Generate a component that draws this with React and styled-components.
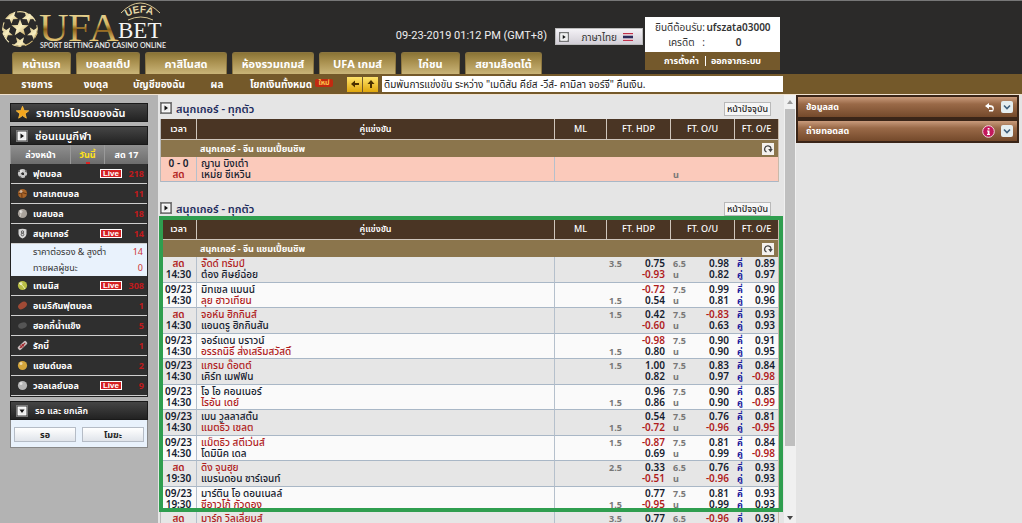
import React from "react";
import styled, { createGlobalStyle, css } from "styled-components";

const GlobalStyle = createGlobalStyle`
  *, *::before, *::after { box-sizing: border-box; }
  body { margin: 0; background: #e4e4e4; }
  body, button { font-family: "Noto Sans", "Noto Sans Thai", "Liberation Sans", sans-serif; }
  button { margin: 0; padding: 0; border: 0; background: none; cursor: pointer; }
  a { color: inherit; text-decoration: none; }
  ul { list-style: none; margin: 0; padding: 0; }
  h2 { margin: 0; }
`;

const Page = styled.div`
  display: flex;
  flex-direction: column;
  height: 100vh;
  overflow: hidden;
  font-size: 10px;
`;

/* ---------- header ---------- */
const Header = styled.header`
  display: flex;
  flex: none;
  background: #2b2a29;
  border-top: 1px solid #777;
`;
const HeaderMain = styled.div`
  width: 645px;
`;
const Brand = styled.div`
  display: flex;
  align-items: flex-start;
  height: 51px;
`;
const Clock = styled.time`
  margin: 27px 8px 0 auto;
  color: #eee;
  font: 11px/16px Roboto, "Liberation Sans", sans-serif;
  white-space: nowrap;
`;
const Language = styled.button`
  display: flex;
  align-items: center;
  gap: 6px;
  width: 88px;
  height: 17px;
  margin: 27px 2px 0 0;
  padding: 0 9px 0 3px;
  background: linear-gradient(#f4f2f6, #d2ced6);
  border: 1px solid #bbb;
  color: #333;
  font-size: 10px;
  line-height: 14px;
  white-space: nowrap;
  span { flex: 1; text-align: right; }
`;
const Tabs = styled.nav`
  display: flex;
  gap: 5px;
  padding-left: 12px;
  height: 22px;
`;
const Tab = styled.a`
  width: ${(p) => p.$w}px;
  background: linear-gradient(#8a7436, #a88f4e 40%, #c9b478);
  border: 1px solid #8c7640;
  border-bottom: 0;
  border-radius: 3px 3px 0 0;
  color: #fff;
  font-size: 11px;
  font-weight: 700;
  line-height: 22px;
  text-align: center;
  white-space: nowrap;
  overflow: hidden;
`;
const Account = styled.section`
  width: 135px;
  margin-top: 16px;
  height: 53px;
`;
const AccountInfo = styled.dl`
  display: grid;
  grid-template-columns: 52px 1fr;
  margin: 0;
  padding: 3px 8px 2px;
  height: 35px;
  background: #fff;
  color: #333;
  font-size: 10px;
  line-height: 14px;
  white-space: nowrap;
  dt { text-align: right; }
  dd { margin: 0; text-align: center; font-weight: 600; }
`;
const AccountLinks = styled.div`
  display: flex;
  justify-content: center;
  gap: 6px;
  height: 18px;
  background: #74592c;
  color: #fff;
  font-size: 9px;
  font-weight: 700;
  line-height: 18px;
  white-space: nowrap;
  a + a { padding-left: 6px; background: linear-gradient(#fff, #fff) left center / 1px 10px no-repeat; }
`;
const SubBar = styled.div`
  display: flex;
  align-items: center;
  flex: none;
  height: 21px;
  padding-left: 13px;
  background: #74592a;
  border-bottom: 1px solid #f1e2cf;
`;
const SubNav = styled.nav`
  display: flex;
  width: 334px;
`;
const SubLink = styled.a`
  width: ${(p) => p.$w}px;
  color: #fff;
  font-size: 10px;
  font-weight: 700;
  line-height: 20px;
  text-align: center;
  white-space: nowrap;
`;
const NewBadge = styled.span`
  align-self: flex-start;
  margin-top: 5px;
  width: 18px;
  height: 8px;
  border-radius: 2px;
  background: #c22a10;
  color: #ffc04a;
  font-size: 7px;
  font-weight: 700;
  line-height: 8px;
  text-align: center;
`;
const ArrowButton = styled.button`
  display: grid;
  place-items: center;
  width: 15px;
  height: 15px;
  margin-right: 1px;
  background: linear-gradient(#ffe36a, #e0a70c);
`;
const Marquee = styled.p`
  width: 401px;
  height: 16px;
  margin: 0 0 0 3px;
  padding-left: 2px;
  background: #fff;
  color: #222;
  font-size: 10px;
  line-height: 16px;
  white-space: nowrap;
  overflow: hidden;
`;

/* ---------- layout ---------- */
const Body = styled.div`
  display: flex;
  flex: 1;
  min-height: 0;
`;
const Sidebar = styled.aside`
  flex: none;
  width: 158px;
  padding: 8px 10px 0;
  background: #b3b3b3;
`;
const Main = styled.main`
  flex: 1;
  min-width: 0;
  padding: 6px 5px 0 2px;
  overflow: hidden;
  background: #e5e5e5;
`;
const ScrollTrack = styled.div`
  display: flex;
  flex-direction: column;
  align-items: center;
  flex: none;
  width: 12px;
  padding: 5px 0 3px;
  background: #f0f0f0;
`;
const ScrollThumb = styled.div`
  width: 10px;
  height: 337px;
  margin: 5px 0 auto;
  background: #bfbfbf;
`;
const RightPanel = styled.aside`
  flex: none;
  width: 226px;
  padding-right: 3px;
  background: #e4e4e4;
`;

/* ---------- sidebar ---------- */
const Bar = styled.h2`
  display: flex;
  align-items: center;
  gap: 7px;
  height: 19px;
  padding-left: 5px;
  background: linear-gradient(#454545, #222);
  border: 1px solid #1a1a1a;
  color: #fff;
  font-size: ${(p) => (p.$small ? 9 : 11)}px;
  font-weight: 600;
  line-height: 17px;
  white-space: nowrap;
`;
const Box = styled.div`
  margin-top: 4px;
  width: 138px;
`;
const DayTabs = styled.div`
  display: grid;
  grid-template-columns: 60px 34px 1fr;
  height: 19px;
  background: linear-gradient(#8f8f8f, #6d6d6d);
`;
const DayTab = styled.button`
  border-left: 1px solid #999;
  color: ${(p) => (p.$on ? "#ffe11a" : "#fff")};
  font-size: 9px;
  font-weight: 700;
  line-height: 18px;
  background: ${(p) => (p.$on ? "linear-gradient(#d22,#d22) center bottom / 4px 2px no-repeat" : "none")};
`;
const Sports = styled.ul`
  border: 1px solid #222;
  border-top: 0;
`;
const Sport = styled.li`
  a {
    display: grid;
    grid-template-columns: 22px 1fr 26px 18px;
    align-items: center;
    height: 20px;
    padding-right: 3px;
    background: #2f2f2f;
    border-bottom: 1px solid #cfcfcf;
    color: #fff;
    font-size: 9px;
    font-weight: 700;
    line-height: 18px;
    white-space: nowrap;
  }
  svg { justify-self: center; }
`;
const Live = styled.span`
  grid-column: 3;
  width: 22px;
  height: 9px;
  border: 1px solid #fff;
  background: #d31f22;
  color: #fff;
  font: 700 8px/7px "Liberation Sans", sans-serif;
  text-align: center;
`;
const Count = styled.span`
  grid-column: 4;
  color: #c01a1c;
  text-align: right;
`;
const Markets = styled.ul`
  background: #e9f2fc;
  li a {
    display: flex;
    justify-content: space-between;
    height: 16px;
    padding: 0 4px 0 22px;
    background: none;
    border: 0;
    color: #333;
    font-weight: 400;
    line-height: 16px;
  }
  li b { color: #c33; font-weight: 400; }
`;
const BetActions = styled.div`
  display: grid;
  grid-template-columns: 1fr 1fr;
  gap: 6px;
  height: 28px;
  padding: 7px 3px 5px;
  background: #e9f2fc;
  border: 1px solid #888;
  border-top: 0;
  button {
    background: linear-gradient(#fff, #e0e4ea);
    border: 1px solid #b5bcc6;
    color: #222;
    font-size: 9px;
    font-weight: 700;
    line-height: 12px;
  }
`;

/* ---------- odds tables ---------- */
const Market = styled.section`
  position: relative;
  margin-bottom: 19px;
`;
const MarketHead = styled.div`
  display: flex;
  align-items: flex-start;
  gap: 4px;
  height: 18px;
  padding-top: 1px;
  h2 {
    flex: 1;
    color: #1c2a5c;
    font-size: 11px;
    font-weight: 600;
    line-height: 14px;
  }
`;
const PageButton = styled.button`
  width: 47px;
  height: 14px;
  margin-right: 8px;
  background: #f6f6f6;
  border: 1px solid #b9b9b9;
  color: #222;
  font-size: 9px;
  font-weight: 500;
  line-height: 12px;
  white-space: nowrap;
`;
const Table = styled.table`
  width: 100%;
  table-layout: fixed;
  border-collapse: separate;
  border-spacing: 0;
  border-left: 1px solid #b9b9b9;
  border-right: 1px solid #c9b9a9;
`;
const Th = styled.th`
  height: 21px;
  padding: 0;
  background: #4a3524;
  border-right: 1px solid #cfc6bc;
  border-bottom: 1px solid #cfc6bc;
  color: #fff;
  font-size: 9px;
  font-weight: ${(p) => (p.$plain ? 500 : 600)};
  line-height: 18px;
  &:last-child { border-right: 0; }
`;
const League = styled.td`
  height: 17px;
  padding: 0 4px 0 39px;
  background: #8b754c;
  color: #fff;
  font-size: 9px;
  font-weight: 700;
  line-height: 17px;
  div { display: flex; align-items: center; justify-content: space-between; }
`;
const Refresh = styled.button`
  display: grid;
  place-items: center;
  width: 12px;
  height: 12px;
  background: #f3f1ee;
`;
const tones = { live: "#fbcabb", even: "#e6e6e6", odd: "#fafafa" };
const Row = styled.tr`
  height: ${(p) => (p.$tone === "even" ? 26 : 25)}px;
  background: ${(p) => tones[p.$tone]};
`;
const Cell = styled.td`
  padding: 1px 0 0;
  border-bottom: 1px solid #a9b7c6;
  color: #15202e;
  font-size: 10px;
  line-height: 11px;
  vertical-align: top;
  white-space: nowrap;
  ${(p) => p.$rule && css`border-right: 1px solid #b5c0cc;`}
`;
const Lines = styled.div`
  display: grid;
  grid-auto-rows: 11px;
  justify-items: ${(p) => p.$align || "end"};
  padding: 0 ${(p) => p.$right || 0}px 0 ${(p) => p.$left || 0}px;
  font-weight: ${(p) => p.$weight || 700};
  font-size: ${(p) => (p.$small ? 9 : 10)}px;
`;
const Text = styled.span`
  color: ${(p) => p.$color || "inherit"};
`;
const Split = styled.div`
  display: flex;
  justify-content: space-between;
`;
const Highlight = styled.div`
  position: absolute;
  inset: 15px -4px auto -1px;
  height: 296px;
  border: 4px solid #2f9e4f;
  pointer-events: none;
`;

/* ---------- right panel ---------- */
const PanelBar = styled.div`
  display: flex;
  align-items: center;
  gap: 6px;
  height: 24px;
  padding: 0 4px 0 8px;
  background: linear-gradient(#c99b7c, #9a6a48 35%, #74492b);
  border: 2px solid #3a2518;
  color: #fff;
  font-size: 9px;
  font-weight: 700;
  span { flex: 1; }
`;
const PanelToggle = styled.button`
  display: grid;
  place-items: center;
  width: 12px;
  height: 12px;
  border-radius: 2px;
  background: #e5edf0;
`;

const SquareIcon = ({ down, size = 12 }) => (
  <svg width={size} height={size} viewBox="0 0 12 12">
    <rect x=".5" y=".5" width="11" height="11" fill="#333" stroke="#777" />
    <rect x="2" y="2" width="8" height="8" fill="#eee" stroke="#fff" />
    <path d={down ? "M3.500 4.500h5L6 8z" : "M4.500 3.500v5L8 6z"} fill="#111" />
  </svg>
);

const Ball = ({ kind }) => {
  const fill = {
    foot: "#c9c9c9", basket: "#a8652a", base: "#a9a39c", snooker: "#d7d7d7", tennis: "#b8bd45",
    american: "#a04a35", hockey: "#555", rugby: "#b88", hand: "#d3a53c", volley: "#b5b5b5",
  }[kind];
  return (
    <svg width="11" height="11" viewBox="0 0 11 11">
      {kind === "american" && <ellipse cx="5.500" cy="5.500" rx="4.800" ry="3.200" transform="rotate(-35 5.500 5.500)" fill={fill} />}
      {kind === "hockey" && <ellipse cx="5.500" cy="5.500" rx="4.500" ry="3" transform="rotate(-20 5.500 5.500)" fill={fill} />}
      {kind === "rugby" && (
        <g transform="rotate(-42 5.500 5.500)">
          <rect x="0" y="3.500" width="11" height="4" rx="1.500" fill="#c9bcbc" />
          <path d="M2 5.500h7M4 4v3M6 4v3" stroke="#a3282d" strokeWidth="1.200" />
        </g>
      )}
      {kind === "snooker" && <path d="M1.500 1.500Q5.500 0 9.500 1.500V6Q9 9 5.500 10.500Q2 9 1.500 6z" fill={fill} />}
      {!["american", "hockey", "rugby", "snooker"].includes(kind) && <circle cx="5.500" cy="5.500" r="4.600" fill={fill} />}
      {kind === "foot" && <path d="M5 4l2 1 0 2-2 0-1-1.500zM1 4l2-2 0 2zM8 1.500l2 3-1.500-.5zM3 8l2 2-3-1zM8 8l2-1-2 3z" fill="#333" />}
      {kind === "basket" && <path d="M2 2q4 3 3 8M1 6q4-3 9 0" stroke="#5a2d0d" fill="none" strokeWidth=".8" />}
      {kind === "base" && <path d="M3 2q2 3 0 7" stroke="#d6d2cc" fill="none" strokeWidth=".8" />}
      {kind === "snooker" && <><circle cx="5.500" cy="4" r="1.200" fill="none" stroke="#444" strokeWidth=".8" /><circle cx="5.500" cy="6.500" r="1.300" fill="none" stroke="#444" strokeWidth=".8" /></>}
      {kind === "tennis" && <path d="M2 3q4 2 6 6" stroke="#eef0b0" fill="none" />}
      {["foot", "hand", "volley", "tennis", "basket", "base"].includes(kind) && <circle cx="4" cy="3.500" r="1.500" fill="#fff" opacity=".55" />}
    </svg>
  );
};

const starPath = (cx, cy, r, rot = 0) =>
  Array.from({ length: 10 }, (_, i) => {
    const a = ((-90 + rot + i * 36) * Math.PI) / 180;
    const q = i % 2 ? r * 0.42 : r;
    return `${i ? "L" : "M"}${(cx + q * Math.cos(a)).toFixed(2)} ${(cy + q * Math.sin(a)).toFixed(2)}`;
  }).join("") + "z";

const Logo = () => (
  <svg width="170" height="50" viewBox="0 0 170 50" role="img" aria-label="UFABET">
    <defs>
      <linearGradient id="gold" x1="0" y1="0" x2="0" y2="1">
        <stop offset="0" stopColor="#f6ecc0" />
        <stop offset=".45" stopColor="#d3b560" />
        <stop offset=".55" stopColor="#8d6117" />
        <stop offset=".8" stopColor="#e6c878" />
        <stop offset="1" stopColor="#e6c878" />
      </linearGradient>
      <linearGradient id="ballGold" x1="0" y1="0" x2="1" y2="1">
        <stop offset="0" stopColor="#cdb679" />
        <stop offset=".5" stopColor="#f8efc2" />
        <stop offset="1" stopColor="#b8964a" />
      </linearGradient>
      <clipPath id="ballClip"><circle cx="20" cy="28" r="18" /></clipPath>
      <path id="arc" d="M125 17Q140 7 156 16" />
    </defs>
    <g clipPath="url(#ballClip)" fill="url(#ballGold)">
      <path d={starPath(20, 27, 9)} />
      {[0, 1, 2, 3, 4].map((i) => {
        const a = ((-90 + i * 72 + 36) * Math.PI) / 180;
        return <path key={i} d={starPath(20 + 14.5 * Math.cos(a), 27.5 + 14.5 * Math.sin(a), 7, i * 72 + 36)} />;
      })}
      <circle cx="20" cy="28" r="17.300" fill="none" stroke="url(#ballGold)" strokeWidth="1.200" strokeDasharray="9 4" />
    </g>
    <g fontFamily="Liberation Serif, serif">
      <text x="39" y="40" fontSize="41" fill="url(#gold)">U</text>
      <text x="68" y="40" fontSize="41" fill="url(#gold)">F</text>
      <text x="89" y="40" fontSize="41" fill="url(#gold)">A</text>
      <text x="118" y="37" fontSize="23" fill="#f4f4f4">BET</text>
    </g>
    <path d="M121 12Q140-8 160 12" fill="none" stroke="#d9c691" />
    <path d="M128 19Q141 13 153 19" fill="none" stroke="#d9c691" />
    <text fontFamily="Liberation Sans, sans-serif" fontSize="10" fontWeight="700" fill="#e6d9a8">
      <textPath href="#arc" startOffset="2">UEFA</textPath>
    </text>
    <text x="40" y="47" fontFamily="Lato, sans-serif" fontSize="7" fontWeight="600" fill="#eee">SPORT BETTING AND CASINO ONLINE</text>
  </svg>
);

const Flag = () => (
  <svg width="10" height="8" viewBox="0 0 10 8">
    <path fill="#c0304a" d="M0 0h10v8H0z" />
    <path fill="#fff" d="M0 1.300h10v5.400H0z" />
    <path fill="#2d2a5a" d="M0 2.600h10v2.800H0z" />
  </svg>
);

const ReloadIcon = () => (
  <svg width="10" height="10" viewBox="0 0 10 10">
    <path d="M3.500 8A3.200 3.200 0 1 1 8 5" fill="none" stroke="#444" strokeWidth="1.200" />
    <path d="M5.200 5H9.800L7.500 8.200z" fill="#444" />
  </svg>
);
const Arrow = ({ up }) => (
  <svg width="10" height="10" viewBox="0 0 10 10">
    <path transform={up ? "rotate(90 5 5)" : undefined} d="M1 5L5 1.500V4h4v2H5v2.500z" fill="#4a3000" />
  </svg>
);
const Triangle = ({ down }) => (
  <svg width="6" height="4" viewBox="0 0 6 4"><path d={down ? "M0 0h6L3 4z" : "M0 4h6L3 0z"} fill={down ? "#444" : "#999"} /></svg>
);
const Chevron = () => (
  <svg width="8" height="8" viewBox="0 0 8 8"><path d="M1 2.500l3 3 3-3" fill="none" stroke="#3f5f7c" strokeWidth="1.600" /></svg>
);

const tabs = [["หน้าแรก", 59], ["บอลสเต็ป", 64], ["คาสิโนสด", 82], ["ห้องรวมเกมส์", 82], ["UFA เกมส์", 77], ["ไก่ชน", 59], ["สยามล็อตโต้", 77]];
const links = [["รายการ", 48], ["งบดุล", 70], ["บัญชีของฉัน", 56], ["ผล", 60], ["โยกเงินทั้งหมด", 68]];
const sports = [
  ["foot", "ฟุตบอล", 218, true], ["basket", "บาสเกตบอล", 11], ["base", "เบสบอล", 18],
  ["snooker", "สนุกเกอร์", 14, true, [["ราคาต่อรอง & สูงต่ำ", 14], ["ทายผลผู้ชนะ", 0]]],
  ["tennis", "เทนนิส", 308, true], ["american", "อเมริกันฟุตบอล", 1], ["hockey", "ฮอกกี้น้ำแข็ง", 5],
  ["rugby", "รักบี้", 1], ["hand", "แฮนด์บอล", 2], ["volley", "วอลเลย์บอล", 9, true],
];
/* [day, time, home, away, favourite, handicap, home/away odds, goal line, over/under odds, odd/even odds] */
const matches = [
  ["สด", "14:30", "จั๊ดด์ ทรัมป์", "ต๋อง ศิษย์ฉ่อย", 0, "3.5", "0.75", "-0.93", "6.5", "0.98", "0.82", "0.89", "0.97"],
  ["09/23", "14:30", "มิทเชล แมนน์", "ลุย ฮาวเทียน", 1, "1.5", "-0.72", "0.54", "7.5", "0.99", "0.81", "0.90", "0.96"],
  ["สด", "14:30", "จอห์น ฮิกกินส์", "แอนดรู ฮิกกินสัน", 0, "1.5", "0.42", "-0.60", "7.5", "-0.83", "0.63", "0.93", "0.93"],
  ["09/23", "14:30", "จอร์แดน บราวน์", "อรรถนิธิ์ ส่งเสริมสวัสดิ์", 1, "1.5", "-0.98", "0.80", "7.5", "0.90", "0.90", "0.91", "0.95"],
  ["09/23", "14:30", "แกรม ด๊อตต์", "เคิร์ท เมฟฟิน", 0, "1.5", "1.00", "0.82", "7.5", "0.83", "0.97", "0.84", "-0.98"],
  ["09/23", "14:30", "โจ โอ คอนเนอร์", "ไรอัน เดย์", 1, "1.5", "0.96", "0.86", "7.5", "0.90", "0.90", "0.85", "-0.99"],
  ["09/23", "14:30", "เบน วูลลาสตั้น", "แมตธิว เซลต", 1, "1.5", "0.54", "-0.72", "7.5", "0.76", "-0.96", "0.81", "-0.95"],
  ["09/23", "14:30", "แม็ตธิว สตีเว่นส์", "โดมินิค เดล", 0, "1.5", "-0.87", "0.69", "7.5", "0.81", "0.99", "0.84", "-0.98"],
  ["สด", "19:30", "ดิง จุนฮุย", "แบรนดอน ซาร์เจนท์", 0, "2.5", "0.33", "-0.51", "6.5", "0.76", "-0.96", "0.93", "0.93"],
  ["09/23", "19:30", "มาร์ติน โอ ดอนเนลล์", "ซีอาวโก้ กัวดอง", 1, "1.5", "0.77", "-0.95", "7.5", "0.81", "0.99", "0.93", "0.93"],
  ["สด", "", "มาร์ก วิลเลี่ยมส์", "", 0, "3.5", "0.77", "", "6.5", "-0.96", "", "0.93", ""],
];

const RED = "#b01c1c";
const Odds = ({ values, right }) => (
  <Lines $right={right} $weight={600}>
    {values.map((v, i) => <Text key={i} $color={v.startsWith("-") ? RED : undefined}>{v}</Text>)}
  </Lines>
);

const MatchRow = ({ m, tone }) => {
  const [day, time, home, away, fav, line, h, a, goals, over, under, odd, even] = m;
  return (
    <Row $tone={tone}>
      <Cell $rule><Lines $align="center" $weight={600}><Text $color={day === "สด" ? RED : undefined}>{day}</Text><Text $color={time === "สด" ? RED : undefined}>{time}</Text></Lines></Cell>
      <Cell $rule>
        <Lines $align="start" $left={4} $weight={500}>
          <Text $color={fav === 0 ? RED : undefined}>{home}</Text>
          <Text $color={fav === 1 ? RED : undefined}>{away}</Text>
        </Lines>
      </Cell>
      <Cell />
      <Cell>
        <Split>
          <Lines $left={2} $small><Text $color="#777">{fav === 0 ? line : " "}</Text><Text $color="#777">{fav === 1 ? line : " "}</Text></Lines>
          {h && <Odds values={[h, a]} right={6} />}
        </Split>
      </Cell>
      <Cell>
        <Split>
          <Lines $left={2} $align="start" $small><Text $color="#777">{goals || " "}</Text><Text $color="#777">{home && !away ? "" : "u"}</Text></Lines>
          {over && <Odds values={[over, under]} right={6} />}
        </Split>
      </Cell>
      <Cell>
        {odd && (
          <Split>
            <Lines $left={2} $align="center" $small><Text $color="#1a1a9c">คี่</Text><Text $color="#1a1a9c">{even && "คู่"}</Text></Lines>
            <Odds values={[odd, even]} right={3} />
          </Split>
        )}
      </Cell>
    </Row>
  );
};

const MarketTable = ({ rows, live, highlighted }) => (
  <Market>
    <MarketHead>
      <SquareIcon />
      <h2>สนุกเกอร์ - ทุกตัว</h2>
      <PageButton>หน้าปัจจุบัน</PageButton>
    </MarketHead>
    <Table>
      <colgroup>
        <col style={{ width: 36 }} /><col /><col style={{ width: 52 }} /><col style={{ width: 64 }} /><col style={{ width: 64 }} /><col style={{ width: 43 }} />
      </colgroup>
      <thead>
        <tr>
          <Th>เวลา</Th><Th>คู่แข่งขัน</Th><Th $plain>ML</Th><Th $plain>FT. HDP</Th><Th $plain>FT. O/U</Th><Th $plain>FT. O/E</Th>
        </tr>
      </thead>
      <tbody>
        <tr>
          <League colSpan={6}><div>สนุกเกอร์ - จีน แชมเปี้ยนชิพ<Refresh aria-label="รีเฟรช"><ReloadIcon /></Refresh></div></League>
        </tr>
        {rows.map((m, i) => <MatchRow key={i} m={m} tone={live ? "live" : i % 2 ? "odd" : "even"} />)}
      </tbody>
    </Table>
    {highlighted && <Highlight />}
  </Market>
);

export default function App() {
  return (
    <Page>
      <GlobalStyle />
      <Header>
        <HeaderMain>
          <Brand>
            <Logo />
            <Clock>09-23-2019 01:12 PM (GMT+8)</Clock>
            <Language><SquareIcon size={10} /><span>ภาษาไทย</span><Flag /></Language>
          </Brand>
          <Tabs>{tabs.map(([t, w]) => <Tab key={t} href="#" $w={w}>{t}</Tab>)}</Tabs>
        </HeaderMain>
        <Account>
          <AccountInfo>
            <dt>ยินดีต้อนรับ:</dt><dd>ufszata03000</dd>
            <dt>เครดิต &nbsp; :</dt><dd>0</dd>
          </AccountInfo>
          <AccountLinks><a href="#">การตั้งค่า</a><a href="#">ออกจากระบบ</a></AccountLinks>
        </Account>
      </Header>
      <SubBar>
        <SubNav>
          {links.map(([t, w]) => <SubLink key={t} href="#" $w={w}>{t}</SubLink>)}
          <NewBadge>ใหม่</NewBadge>
        </SubNav>
        <ArrowButton aria-label="ซ้าย"><Arrow /></ArrowButton>
        <ArrowButton aria-label="ขึ้น"><Arrow up /></ArrowButton>
        <Marquee>ดิมพันการแข่งขัน ระหว่าง "เมดิสัน คีย์ส -วีส์- คามิลา จอร์จี" คืนเงิน.</Marquee>
      </SubBar>
      <Body>
        <Sidebar>
          <Bar>
            <svg width="13" height="13" viewBox="0 0 14 14"><path d={starPath(7, 7.4, 7)} fill="#f4a61d" stroke="#f8b93c" strokeWidth="1" strokeLinejoin="round" /></svg>
            รายการโปรดของฉัน
          </Bar>
          <Box>
            <Bar><SquareIcon />ซ่อนเมนูกีฬา</Bar>
            <DayTabs><DayTab>ล่วงหน้า</DayTab><DayTab $on>วันนี้</DayTab><DayTab>สด 17</DayTab></DayTabs>
            <Sports>
              {sports.map(([kind, name, count, live, markets]) => (
                <Sport key={kind}>
                  <a href="#"><Ball kind={kind} />{name}{live && <Live>Live</Live>}<Count>{count}</Count></a>
                  {markets && <Markets>{markets.map(([n, c]) => <li key={n}><a href="#">{n}<b>{c}</b></a></li>)}</Markets>}
                </Sport>
              ))}
            </Sports>
          </Box>
          <Box>
            <Bar $small><SquareIcon down />รอ และ ยกเลิก</Bar>
            <BetActions><button>รอ</button><button>โมฆะ</button></BetActions>
          </Box>
        </Sidebar>
        <Main>
          <MarketTable live rows={[["0 - 0", "สด", "ญาน บิงเต๋า", "เหม่ย ซีเหวิน", -1]]} />
          <MarketTable rows={matches} highlighted />
        </Main>
        <ScrollTrack><Triangle /><ScrollThumb /><Triangle down /></ScrollTrack>
        <RightPanel>
          <PanelBar>
            <span>ข้อมูลสด</span>
            <svg width="10" height="9" viewBox="0 0 10 9"><path d="M4 0L0 3l4 3V4q4-.5 3.500 3H4v1.500h4Q11 2 4 2z" fill="#fff" /></svg>
            <PanelToggle aria-label="ข้อมูลสด"><Chevron /></PanelToggle>
          </PanelBar>
          <PanelBar>
            <span>ถ่ายทอดสด</span>
            <svg width="13" height="13" viewBox="0 0 13 13"><circle cx="6.500" cy="6.500" r="5.800" fill="#c2185b" stroke="#f4d5e0" /><path d="M5 5.500h2.500V9H8v1H5V9h.7V6.500H5zM5.700 3h1.800v1.600H5.700z" fill="#fff" /></svg>
            <PanelToggle aria-label="ถ่ายทอดสด"><Chevron /></PanelToggle>
          </PanelBar>
        </RightPanel>
      </Body>
    </Page>
  );
}
